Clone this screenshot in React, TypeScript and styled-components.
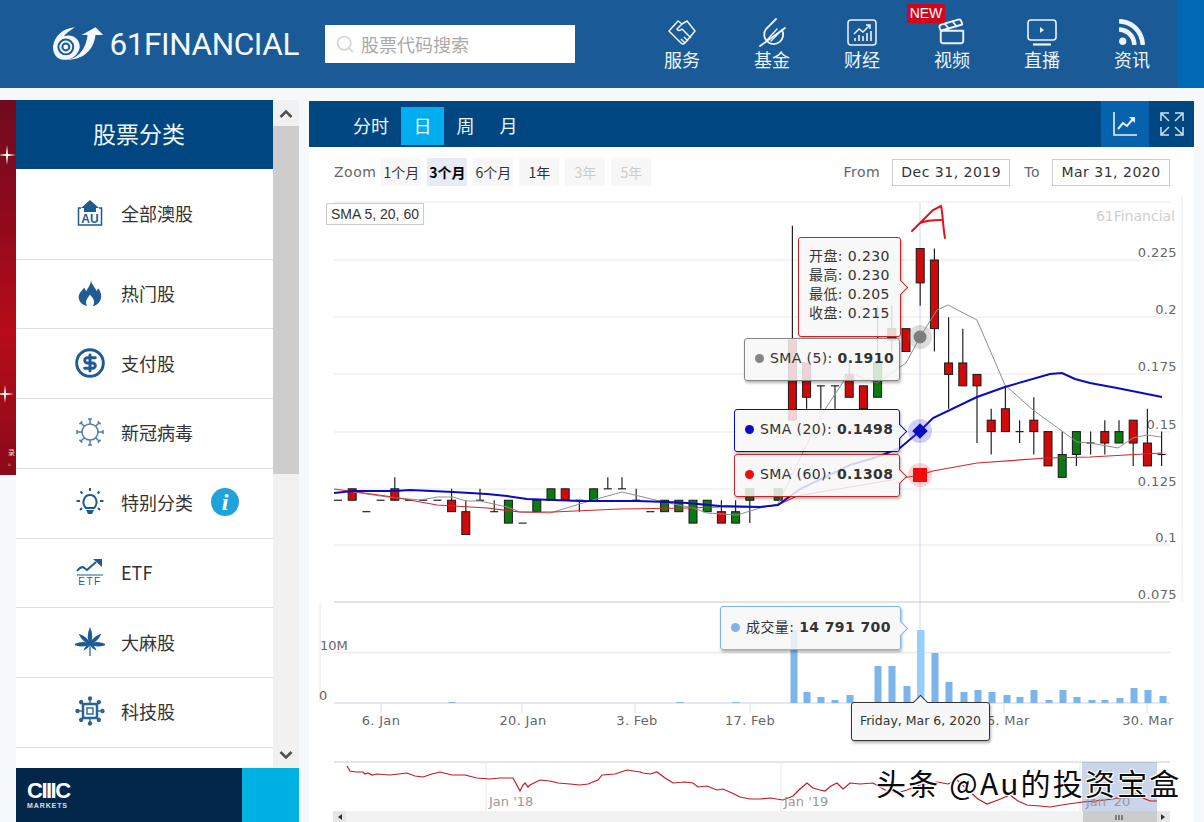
import React from "react";
import styled, { createGlobalStyle } from "styled-components";
import { FaRss } from "react-icons/fa";
import { CircleDollarSign, Clapperboard, Search } from "lucide-react";

const UI_FONT = `"DejaVu Sans", "Noto Sans CJK SC", sans-serif`;
const CJK_FONT = `"Noto Sans CJK SC", "Liberation Sans", sans-serif`;

const GlobalStyle = createGlobalStyle`
  html, body {
    margin: 0;
    height: 822px;
    overflow: hidden;
    background: #f6f9fc;
    font-family: ${CJK_FONT};
  }
  * { box-sizing: border-box; }
`;

/* ---------- header ---------- */
const Header = styled.header`
  display: flex;
  align-items: center;
  height: 88px;
  padding-left: 53px;
  background: #1a5a96;
`;
const Logo = styled.div`
  display: flex;
  align-items: center;
  gap: 6px;
  width: 246px;
  margin-right: 26px;
  color: #f2f8fc;
  font-family: Roboto, sans-serif;
  font-size: 31.5px;
  font-weight: 400;
  letter-spacing: -0.4px;
`;
const SearchBox = styled.div`
  display: flex;
  align-items: center;
  gap: 6px;
  width: 250px;
  height: 38px;
  padding-left: 10px;
  background: #fff;
  color: #a9a9a9;
  font-size: 18px;
`;
const Nav = styled.nav`
  display: flex;
  margin-left: 62px;
`;
const NavItem = styled.div`
  position: relative;
  display: flex;
  flex-direction: column;
  align-items: center;
  width: 90px;
  height: 88px;
  padding-top: 17px;
  color: #eef5fa;
  font-size: 18px;
  line-height: 26px;
  svg { display: block; height: 30px; margin-bottom: -1px; }
`;
const NewBadge = styled.span`
  position: absolute;
  left: 0;
  top: 4px;
  width: 38px;
  height: 19px;
  background: #d0061c;
  border-radius: 2px;
  color: #fff;
  font-family: "Liberation Sans", sans-serif;
  font-size: 14px;
  line-height: 19px;
  text-align: center;
`;
const HeaderEnd = styled.div`
  flex: 1;
  align-self: stretch;
  background: #0068b4;
`;

/* ---------- page body ---------- */
const Main = styled.main`
  display: flex;
  align-items: flex-start;
  padding-top: 12px;
`;
const AdStrip = styled.div`
  position: relative;
  flex: none;
  width: 16px;
  height: 375px;
  overflow: hidden;
  background: linear-gradient(#6f0a20 0%, #8e0a1c 30%, #b60d18 62%, #8a0a1a 100%);
  svg { display: block; }
`;
const AdNote = styled.span`
  position: absolute;
  right: 1px;
  bottom: 8px;
  color: #f1d4d4;
  font-size: 7px;
  line-height: 10px;
  text-align: right;
`;
const SideColumn = styled.div`
  flex: none;
  width: 283px;
  margin-right: 10px;
`;
const SideRow = styled.div`
  display: flex;
  height: 668px;
`;
const SidePanel = styled.aside`
  width: 257px;
  overflow: hidden;
  background: #fff;
`;
const SideTitle = styled.h2`
  height: 69px;
  margin: 0;
  padding-right: 11px;
  background: #004681;
  color: #f0f6fb;
  font-size: 23px;
  font-weight: 400;
  line-height: 66px;
  text-align: center;
`;
const SideItem = styled.div<{ $tall?: boolean }>`
  display: flex;
  align-items: center;
  height: ${(p) => (p.$tall ? "90.5px" : "69.75px")};
  padding: 0 0 2px 58px;
  border-bottom: 1.5px solid #dfdfdf;
  color: #333;
  font-size: 18px;
`;
const SideIcon = styled.span`
  display: flex;
  align-items: center;
  justify-content: center;
  width: 32px;
  height: 32px;
  margin-right: 15px;
  color: #1f5a92;
`;
const InfoBadge = styled.span`
  display: flex;
  align-items: center;
  justify-content: center;
  width: 28px;
  height: 28px;
  margin-left: 18px;
  border-radius: 50%;
  background: #1fa3da;
  color: #fff;
  font-family: "Liberation Serif", serif;
  font-size: 24px;
  font-style: italic;
  font-weight: 700;
`;
const ScrollRail = styled.div`
  display: flex;
  flex-direction: column;
  width: 26px;
  background: #f1f1f1;
`;
const ScrollCap = styled.div`
  display: flex;
  align-items: center;
  justify-content: center;
  height: 26px;
  background: #f1f1f1;
  color: #505050;
`;
const ScrollThumb = styled.div`
  height: 348px;
  background: #cdcdcd;
`;
const ScrollGap = styled.div`
  flex: 1;
`;
const Banner = styled.div`
  display: flex;
  height: 54px;
`;
const BannerBrand = styled.div`
  display: flex;
  flex-direction: column;
  justify-content: center;
  width: 226px;
  padding-left: 11px;
  background: #02264a;
  color: #fff;
  font-family: "Liberation Sans", sans-serif;
`;
const BrandName = styled.span`
  font-size: 22px;
  font-weight: 700;
  line-height: 20px;
  letter-spacing: -1.5px;
`;
const BrandSub = styled.span`
  font-size: 7px;
  font-weight: 700;
  line-height: 9px;
  letter-spacing: 0.9px;
  opacity: 0.85;
`;
const BannerCta = styled.div`
  flex: 1;
  background: #00b2e3;
`;

/* ---------- chart panel ---------- */
const ChartPanel = styled.section`
  flex: none;
  width: 885px;
  margin-top: 1px;
  background: #fff;
`;
const TabBar = styled.div`
  display: flex;
  align-items: stretch;
  height: 46px;
  padding-left: 32px;
  background: #004681;
  color: #f0f6fb;
  font-size: 18px;
`;
const Tab = styled.div<{ $active?: boolean }>`
  display: flex;
  align-items: center;
  justify-content: center;
  min-width: 43px;
  height: 38px;
  margin-top: 6px;
  padding: 0 ${(p) => (p.$active ? "0" : "12px")} 3px;
  background: ${(p) => (p.$active ? "#00aeef" : "transparent")};
`;
const TabSpacer = styled.div`
  flex: 1;
`;
const TabTool = styled.div<{ $active?: boolean }>`
  display: flex;
  align-items: center;
  justify-content: center;
  width: ${(p) => (p.$active ? "48px" : "45px")};
  background: ${(p) => (p.$active ? "#0662ac" : "transparent")};
`;
const RangeBar = styled.div`
  display: flex;
  align-items: center;
  height: 48px;
  padding: 2px 24px 0 25px;
  font-family: ${UI_FONT};
  font-size: 14px;
  letter-spacing: 0.5px;
  color: #666;
`;
const ZoomLabel = styled.span`
  margin-right: 5px;
`;
const ZoomBtn = styled.span<{ $active?: boolean; $off?: boolean }>`
  display: flex;
  align-items: center;
  justify-content: center;
  width: 40px;
  height: 28px;
  margin-right: 6px;
  background: ${(p) => (p.$active ? "#e6ebf5" : "#f7f7f7")};
  color: ${(p) => (p.$off ? "#cccccc" : p.$active ? "#000" : "#333")};
  font-family: ${CJK_FONT};
  font-weight: ${(p) => (p.$active ? 700 : 400)};
  letter-spacing: 0;
`;
const RangeSpacer = styled.div`
  flex: 1;
`;
const DateLabel = styled.span`
  margin: 0 12px 0 14px;
  color: #666;
`;
const DateInput = styled.span`
  display: flex;
  align-items: center;
  justify-content: center;
  width: 118px;
  height: 27px;
  border: 1px solid #ccc;
  color: #333;
`;
const ChartArea = styled.div`
  position: relative;
  height: 627px;
  overflow: hidden;
  svg { display: block; }
`;
const SmaNote = styled.div`
  position: absolute;
  left: 17px;
  top: 8px;
  width: 98px;
  height: 22px;
  border: 1px solid #ccc;
  background: #fff;
  color: #333;
  font-family: "Liberation Sans", sans-serif;
  font-size: 14px;
  line-height: 20px;
  text-align: center;
`;
const Tip = styled.div<{
  $left: number;
  $top: number;
  $width: number;
  $height: number;
  $color: string;
  $arrow?: boolean;
}>`
  position: absolute;
  left: ${(p) => p.$left - 309}px;
  top: ${(p) => p.$top - 195}px;
  display: flex;
  align-items: center;
  width: ${(p) => p.$width}px;
  height: ${(p) => p.$height}px;
  padding: 0 0 4px 10px;
  border: 1.5px solid ${(p) => p.$color};
  border-radius: 3px;
  background: rgba(247, 247, 247, 0.85);
  box-shadow: 1px 2px 3px rgba(0, 0, 0, 0.3);
  color: #333;
  font-family: ${UI_FONT};
  font-size: 14px;
  letter-spacing: 0.4px;
  white-space: nowrap;
  &::after {
    content: "";
    display: ${(p) => (p.$arrow ? "block" : "none")};
    position: absolute;
    right: -6px;
    top: 50%;
    width: 10px;
    height: 10px;
    margin-top: -5px;
    border-top: 1.5px solid ${(p) => p.$color};
    border-right: 1.5px solid ${(p) => p.$color};
    background: #f7f7f7;
    transform: rotate(45deg);
  }
`;
const TipDot = styled.span<{ $color: string }>`
  flex: none;
  width: 9px;
  height: 9px;
  margin: 2px 6px 0 0;
  border-radius: 50%;
  background: ${(p) => p.$color};
`;
const OhlcList = styled.div`
  font-size: 14px;
  line-height: 19px;
`;
const DateTip = styled.div`
  position: absolute;
  left: ${851 - 309}px;
  top: ${702 - 195}px;
  width: 139px;
  height: 39px;
  border: 1.5px solid #333;
  border-radius: 3px;
  background: #f7f7f7;
  box-shadow: 1px 2px 3px rgba(0, 0, 0, 0.3);
  color: #333;
  font-family: ${UI_FONT};
  font-size: 12.5px;
  line-height: 36px;
  text-align: center;
  white-space: nowrap;
  &::before {
    content: "";
    position: absolute;
    left: 63px;
    top: -6px;
    width: 10px;
    height: 10px;
    border-top: 1.5px solid #333;
    border-left: 1.5px solid #333;
    background: #f7f7f7;
    transform: rotate(45deg);
  }
`;
const Watermark = styled.div`
  position: absolute;
  left: ${876 - 309}px;
  top: ${762 - 195}px;
  color: #0c0c0c;
  font-family: ${CJK_FONT};
  font-size: 30px;
  line-height: 40px;
  letter-spacing: 2.2px;
  white-space: nowrap;
  text-shadow: 1px 1px 0 #fff, -1px -1px 0 #fff, 1px -1px 0 #fff, -1px 1px 0 #fff;
`;

/* ---------- chart data: prices in thousandths ---------- */
const STEP = 14.2;
const xAt = (i: number) => 338 + STEP * i;
const yAt = (p: number) => 260 + (225 - p) * 2.288;

// [index, open, high, low, close]
const CANDLES: number[][] = [
  [0, 120, 120, 120, 120], [1, 125, 125, 120, 120], [2, 115, 115, 115, 115], [3, 120, 120, 120, 120],
  [4, 125, 130, 120, 120], [5, 120, 120, 120, 120], [6, 120, 120, 120, 120], [7, 120, 120, 120, 120],
  [8, 120, 125, 115, 115], [9, 115, 120, 105, 105], [10, 120, 125, 120, 120], [11, 115, 120, 115, 115],
  [12, 110, 120, 110, 120], [13, 110, 110, 110, 110], [14, 115, 120, 115, 120], [15, 120, 125, 120, 125],
  [16, 125, 125, 120, 120], [17, 120, 120, 115, 120], [18, 120, 125, 120, 125], [19, 125, 130, 125, 125],
  [20, 125, 130, 125, 125], [21, 120, 125, 120, 120], [22, 115, 115, 115, 115], [23, 115, 120, 115, 120],
  [24, 115, 120, 115, 120], [25, 110, 120, 110, 120], [26, 115, 120, 115, 120], [27, 115, 120, 110, 110],
  [28, 110, 120, 110, 115], [29, 120, 125, 110, 125], [31, 120, 125, 120, 125], [32, 190, 240, 155, 155],
  [33, 180, 180, 160, 165], [34, 170, 170, 160, 170], [35, 170, 170, 160, 170], [36, 175, 180, 165, 165],
  [37, 170, 170, 160, 160], [38, 165, 205, 165, 180], [39, 195, 205, 185, 190], [40, 195, 195, 185, 185],
  [41, 230, 230, 205, 215], [42, 225, 230, 185, 195], [43, 180, 200, 160, 175], [44, 180, 195, 170, 170],
  [45, 175, 175, 145, 170], [46, 155, 160, 140, 150], [47, 160, 170, 150, 150], [48, 150, 155, 145, 150],
  [49, 155, 165, 140, 150], [50, 150, 150, 135, 135], [51, 130, 150, 130, 140], [52, 140, 150, 135, 150],
  [53, 145, 150, 140, 145], [54, 150, 155, 140, 145], [55, 145, 155, 145, 150], [56, 155, 155, 135, 145],
  [57, 145, 160, 135, 135], [58, 140, 150, 135, 140],
];

const SMA20 = "334,493 353,491 395,491 410,490 453,492 487,494 507,496 527,499 580,501 637,501 667,502 687,503 720,506 760,507 778,505 800,489 850,465 877,457 900,448 920,431 933,418 977,397 1005,387 1050,374 1062,373 1075,379 1090,383 1117,388 1162,397";
const SMA60 = "334,489 357,492 393,497 437,505 487,508 520,512 553,512 620,509 687,508 720,507 760,507 778,505 797,496 903,478 920,475 933,471 977,463 1047,458 1090,457 1162,453";
const SMA5 = "353,492 387,497 420,500 437,497 453,497 466,501 480,501 507,507 520,512 550,513 593,500 622,492 664,502 693,508 707,513 737,515 760,508 778,504 820,417 849,373 877,383 906,363 920,337 937,310 948,305 977,320 1005,385 1033,410 1077,442 1090,443 1118,448 1133,438 1147,435 1161,437";
const NAV_LINE = "347,766 350,771 356,772 363,772 365,774 368,773 372,775 377,774 390,775 407,773 415,776 423,777 432,774 440,772 452,775 465,775 477,778 490,779 500,778 513,778 520,791 523,785 525,783 528,787 530,785 540,780 550,781 558,783 570,784 580,785 588,784 593,782 598,780 602,775 615,774 627,770 640,772 643,773 650,774 657,772 665,778 673,783 685,782 693,783 698,787 707,786 717,790 723,789 732,793 740,797 750,799 760,799 770,798 783,800 793,796 800,789 807,783 813,788 820,790 825,791 831,786 837,783 843,789 850,783 860,784 873,783 885,790 897,793 907,790 920,785 937,782 948,784 957,780 970,792 978,799 987,804 998,800 1010,795 1018,801 1027,805 1040,806 1050,807 1068,804 1083,802 1105,800 1127,797 1135,794 1143,798 1150,801 1157,801";

const VOLUMES: number[][] = [
  [794, 630], [807, 692], [821, 697], [835, 700], [850, 695], [878, 666], [892, 666], [907, 686],
  [935, 653], [949, 682], [964, 692], [978, 690], [992, 692], [1007, 695], [1020, 697], [1034, 690],
  [1049, 700], [1063, 690], [1077, 697], [1092, 700], [1105, 700], [1120, 698], [1134, 688], [1148, 690], [1163, 696],
  [452, 702], [680, 702], [736, 702],
];

const PRICE_GRID: [number, string][] = [
  [202, ""], [260, "0.225"], [317, "0.2"], [374, "0.175"], [432, "0.15"], [489, "0.125"], [545, "0.1"], [602, "0.075"],
];
const AXIS_LABELS: [number, string][] = [
  [381, "6. Jan"], [523, "20. Jan"], [637, "3. Feb"], [750, "17. Feb"], [1004, "16. Mar"], [1148, "30. Mar"],
];
const AXIS_TICKS = [381, 522, 635, 750, 1004, 1147];

function Candle({ data }: { data: number[] }) {
  const [i, open, high, low, close] = data;
  const x = xAt(i);
  const flat = open === close;
  const up = close > open;
  return (
    <g>
      {high !== low && <line x1={x} x2={x} y1={yAt(high)} y2={yAt(low)} stroke="#222" strokeWidth={1.2} />}
      {flat ? (
        <line x1={x - 4} x2={x + 4} y1={yAt(open)} y2={yAt(open)} stroke="#222" strokeWidth={1.2} />
      ) : (
        <rect
          x={x - 4}
          width={8}
          y={yAt(Math.max(open, close))}
          height={yAt(Math.min(open, close)) - yAt(Math.max(open, close))}
          fill={up ? "#0b7a12" : "#cf0a0a"}
          stroke="#1a1a1a"
          strokeWidth={1}
        />
      )}
    </g>
  );
}

function StockChart() {
  const axisFont = { fontFamily: "DejaVu Sans, sans-serif", fontSize: 13 };
  return (
    <svg width={885} height={627} viewBox="309 195 885 627">
      <line x1={1182} x2={1182} y1={195} y2={602} stroke="#e8eef5" />
      {PRICE_GRID.map(([y, label]) => (
        <g key={y}>
          <line x1={334} x2={1170} y1={y} y2={y} stroke={y === 602 ? "#e3e3e3" : "#e9e9e9"} strokeWidth={y === 602 ? 2 : 1} />
          {label && (
            <text x={1177} y={y - 3} textAnchor="end" fill="#666" letterSpacing={0.4} {...axisFont}>
              {label}
            </text>
          )}
        </g>
      ))}
      <text x={1175} y={221} textAnchor="end" fill="#cfcfcf" fontFamily="DejaVu Sans, sans-serif" fontSize={14}>
        61Financial
      </text>
      <line x1={920} x2={920} y1={203} y2={705} stroke="#ccd6eb" />
      {CANDLES.map((c) => (
        <Candle key={c[0]} data={c} />
      ))}
      <polyline points={SMA5} fill="none" stroke="#8f8f8f" strokeWidth={1} />
      <polyline points={SMA60} fill="none" stroke="#d6262c" strokeWidth={1.2} />
      <polyline points={SMA20} fill="none" stroke="#0a0ac2" strokeWidth={2} />

      <path d="M912 231 L933 210 L941 206 C943 215 943 228 945 238 M920 223 C927 220 934 220 941 220" fill="none" stroke="#e0141c" strokeWidth={2} strokeLinecap="round" />

      <circle cx={920} cy={337} r={12} fill="rgba(120,120,120,0.25)" />
      <circle cx={920} cy={337} r={6.5} fill="#7d7d7d" />
      <circle cx={920} cy={431} r={12} fill="rgba(60,60,230,0.25)" />
      <rect x={914.5} y={425.5} width={11} height={11} transform="rotate(45 920 431)" fill="#0a0ac2" />
      <circle cx={920} cy={475} r={12} fill="rgba(230,60,60,0.22)" />
      <rect x={913} y={468} width={14} height={14} fill="#ee0c0c" />

      {/* volume pane */}
      <line x1={320} x2={320} y1={602} y2={702} stroke="#e6e6e6" />
      <line x1={334} x2={1170} y1={652.5} y2={652.5} stroke="#e9e9e9" strokeWidth={1.5} />
      <line x1={334} x2={1170} y1={703} y2={703} stroke="#c9d4e3" strokeWidth={1.2} />
      <text x={320} y={650} fill="#666" {...axisFont}>10M</text>
      <text x={319} y={700} fill="#666" {...axisFont}>0</text>
      {VOLUMES.map(([x, top]) => (
        <rect key={x} x={x - 3.5} y={top} width={7} height={703 - top} fill="#7cb5ec" />
      ))}
      <rect x={917} y={630} width={7.5} height={73} fill="#95ceff" />
      {AXIS_TICKS.map((x) => (
        <line key={x} x1={x} x2={x} y1={703} y2={713} stroke="#d8dfe8" />
      ))}
      {AXIS_LABELS.map(([x, label]) => (
        <text key={label} x={x} y={725} textAnchor="middle" fill="#666" letterSpacing={0.3} {...axisFont}>
          {label}
        </text>
      ))}

      {/* navigator */}
      <line x1={334} x2={1170} y1={762} y2={762} stroke="#c8ccd6" />
      <rect x={1082} y={762} width={75} height={49} fill="rgba(102,133,194,0.35)" />
      {[486, 781, 1080].map((x) => (
        <line key={x} x1={x} x2={x} y1={762} y2={811} stroke="#e9e9e9" />
      ))}
      <polyline points={NAV_LINE} fill="none" stroke="#c01a22" strokeWidth={1.2} />
      {[[489, "Jan '18"], [784, "Jan '19"], [1086, "Jan '20"]].map(([x, label]) => (
        <text key={label} x={x} y={806} fill="#999" {...axisFont}>{label}</text>
      ))}
      <rect x={333} y={811} width={837} height={11} fill="#f2f2f2" />
      <rect x={333} y={811} width={13} height={11} fill="#e6e6e6" />
      <path d="M342 814 v6 l-4 -3z" fill="#333" />
      <rect x={1083} y={811} width={74} height={11} fill="#cccccc" />
      <path d="M1116 815 v5 M1119 815 v5 M1122 815 v5" stroke="#333" />
      <rect x={1157} y={811} width={13} height={11} fill="#e6e6e6" />
      <path d="M1161 814 v6 l4 -3z" fill="#333" />
    </svg>
  );
}

/* ---------- drawn icons ---------- */
const LogoMark = () => (
  <svg width="51" height="34" viewBox="0 0 51 34" fill="none">
    <path d="M0 20 C1 9 10 1 22 0 C18 3 13 6 11 9 C21 6 28 13 27 21 C25 30 17 33 11 33 C4 33 0 27 0 20 Z" fill="#f2f8fc" />
    <circle cx="13" cy="20" r="7.5" stroke="#1a5a96" strokeWidth="2" />
    <circle cx="13" cy="20" r="3.5" stroke="#1a5a96" strokeWidth="2" />
    <path d="M12 33 C24 33 33 24 35 8 L29 8 L43 0 L51 8 L43 8 C41 24 30 34 12 33 Z" fill="#f2f8fc" />
  </svg>
);
const HandshakeIcon = () => (
  <svg width="30" height="30" viewBox="0 0 30 30" fill="none" stroke="#eef5fa" strokeWidth="1.5" strokeLinejoin="round">
    <path d="M11 4 L15 7 L20 4 L28 14 L18 26 Q16 28 14 26 L2 14 Z" />
    <path d="M15 7 L10 12 Q12 15 15 12 L24 21 M21 24 L17 20 M18 26 L14 22" />
  </svg>
);
const FundIcon = () => (
  <svg width="30" height="30" viewBox="0 0 30 30" fill="none" stroke="#eef5fa" strokeWidth="1.8" strokeLinecap="round">
    <path d="M19 2 L9 12 A9.5 9.5 0 1 0 25 13" />
    <path d="M3 29 L28 11" />
    <path d="M10 23 L20 12 M14 24 L23 15" strokeWidth="1.3" />
  </svg>
);
const FinanceIcon = () => (
  <svg width="30" height="30" viewBox="0 0 30 30" fill="none" stroke="#eef5fa" strokeWidth="1.5">
    <rect x="1" y="3" width="28" height="25" rx="3" />
    <path d="M7 17 L12 12 L16 15 L23 8 M19 8 H23 V12" />
    <path d="M8 24 V21 M12 24 V18 M16 24 V19 M20 24 V16 M24 24 V14" strokeWidth="1.6" />
  </svg>
);
const LiveIcon = () => (
  <svg width="30" height="30" viewBox="0 0 30 30" fill="none" stroke="#eef5fa" strokeWidth="1.6">
    <rect x="1" y="3" width="28" height="20" rx="3" />
    <path d="M13 10 L17 13 L13 16 Z" fill="#eef5fa" stroke="none" />
    <path d="M6 27.5 H24" strokeWidth="2.2" />
  </svg>
);
const TrendIcon = () => (
  <svg width="26" height="26" viewBox="0 0 26 26" fill="none" stroke="#e9f2f9" strokeWidth="1.6">
    <path d="M2 1 V24 H25" />
    <path d="M6 18 L11 12 L15 15 L21 8" strokeWidth="2" />
    <path d="M17 6 H23 V12 Z" fill="#e9f2f9" stroke="none" />
  </svg>
);
const ExpandIcon = () => (
  <svg width="24" height="24" viewBox="0 0 24 24" fill="none" stroke="#cfe2f0" strokeWidth="1.5">
    <path d="M1 9 V1 H9 M1 1 L9 9 M15 1 H23 V9 M23 1 L15 9 M1 15 V23 H9 M1 23 L9 15 M23 15 V23 H15 M23 23 L15 15" />
  </svg>
);
const AuIcon = () => (
  <svg width="26" height="28" viewBox="0 0 26 28" fill="none">
    <path d="M13 1 L22 9 H19 V13 H7 V9 H4 Z" fill="#1f5a92" />
    <path d="M4 9 H1.5 V26 H24.5 V9 H22" stroke="#1f5a92" strokeWidth="1.5" />
    <text x="13" y="24" textAnchor="middle" fill="#1f5a92" fontFamily="Liberation Sans, sans-serif" fontSize="12" fontWeight="700">AU</text>
  </svg>
);
const FlameIcon = () => (
  <svg width="28" height="30" viewBox="0 0 30 30" fill="#1f5a92">
    <path d="M16 1 C17 7 21 9 22 13 C23 11 24 11 24 10 C27 15 28 19 26 23 C24 27 20 29 18 29 C21 25 19 21 15 17 C12 21 9 24 12 29 C8 28 4 26 3 21 C2 15 7 12 9 9 C10 11 10 12 11 13 C13 9 16 6 16 1 Z" />
  </svg>
);
const VirusIcon = () => {
  const spikes = [0, 45, 90, 135, 180, 225, 270, 315];
  return (
    <svg width="30" height="30" viewBox="0 0 30 30" fill="none" stroke="#4d7ea8" strokeWidth="1.5">
      <circle cx="15" cy="15" r="8" />
      {spikes.map((a) => (
        <path key={a} transform={`rotate(${a} 15 15)`} d="M15 7 V2 M13 2 H17" />
      ))}
    </svg>
  );
};
const BulbIcon = () => (
  <svg width="30" height="30" viewBox="0 0 30 30" fill="none" stroke="#1f5a92" strokeWidth="2">
    <path d="M11 21 C6 16 9 8 15 8 C21 8 24 16 19 21 Z" />
    <path d="M11 23 H19 L17 27 H13 Z" fill="#1f5a92" stroke="none" />
    <path d="M15 4 V1 M5 14 H1.5 M25 14 H28.5 M7.5 6.5 L5.5 4.5 M22.5 6.5 L24.5 4.5 M5 23 L7 21 M25 23 L23 21" />
  </svg>
);
const EtfIcon = () => (
  <svg width="28" height="28" viewBox="0 0 28 28" fill="none" stroke="#1f5a92">
    <path d="M1 13 Q4 9 7 9 L11 12 L20 4" strokeWidth="2" />
    <path d="M17 1 H26 V9 Z" fill="#1f5a92" stroke="none" />
    <path d="M1 17 H27" strokeWidth="1" />
    <text x="14" y="27" textAnchor="middle" fill="#1f5a92" stroke="none" fontFamily="Liberation Sans, sans-serif" fontSize="10" letterSpacing="1.5">ETF</text>
  </svg>
);
const LeafIcon = () => {
  const leaves: [number, number][] = [[0, 1], [-48, 0.9], [48, 0.9], [-92, 1], [92, 1], [-135, 0.55], [135, 0.55]];
  return (
    <svg width="30" height="30" viewBox="0 0 30 30" fill="#1f5a92">
      {leaves.map(([angle, size]) => (
        <path
          key={angle}
          transform={`translate(15 17) rotate(${angle}) scale(${size})`}
          d="M0 1 Q-4.5 -7 0 -17 Q4.5 -7 0 1 Z"
        />
      ))}
      <path d="M15 17 V29" stroke="#1f5a92" strokeWidth="1.2" />
    </svg>
  );
};
const ChipIcon = () => {
  const legs = [0, 45, 90, 135, 180, 225, 270, 315];
  return (
    <svg width="30" height="30" viewBox="0 0 30 30" fill="none" stroke="#2b6398" strokeWidth="1.4">
      <rect x="8" y="8" width="14" height="14" rx="1.5" strokeWidth="2.5" />
      <rect x="12" y="12" width="6" height="6" />
      {legs.map((a) => (
        <g key={a} transform={`rotate(${a} 15 15)`}>
          <path d="M15 7 V3.5" />
          <circle cx="15" cy="2.5" r="1.5" fill="#2b6398" />
        </g>
      ))}
    </svg>
  );
};
const Sparkle = ({ x, y, r }: { x: number; y: number; r: number }) => (
  <path d={`M${x} ${y - r} L${x + 1} ${y - 1} L${x + r} ${y} L${x + 1} ${y + 1} L${x} ${y + r} L${x - 1} ${y + 1} L${x - r} ${y} L${x - 1} ${y - 1} Z`} fill="#fff" />
);
const Chevron = ({ up }: { up?: boolean }) => (
  <svg width="14" height="9" viewBox="0 0 14 9" fill="none" stroke="currentColor" strokeWidth="2.6">
    <path d={up ? "M1.5 8 L7 2.5 L12.5 8" : "M1.5 1 L7 6.5 L12.5 1"} />
  </svg>
);

const NAV_ITEMS = [
  { label: "服务", icon: <HandshakeIcon /> },
  { label: "基金", icon: <FundIcon /> },
  { label: "财经", icon: <FinanceIcon /> },
  { label: "视频", icon: <Clapperboard size={30} strokeWidth={1.5} />, isNew: true },
  { label: "直播", icon: <LiveIcon /> },
  { label: "资讯", icon: <FaRss size={26} /> },
];

const SIDE_ITEMS = [
  { label: "全部澳股", icon: <AuIcon /> },
  { label: "热门股", icon: <FlameIcon /> },
  { label: "支付股", icon: <CircleDollarSign size={32} strokeWidth={2.2} /> },
  { label: "新冠病毒", icon: <VirusIcon /> },
  { label: "特别分类", icon: <BulbIcon />, info: true },
  { label: "ETF", icon: <EtfIcon /> },
  { label: "大麻股", icon: <LeafIcon /> },
  { label: "科技股", icon: <ChipIcon /> },
];

export default function App() {
  return (
    <>
      <GlobalStyle />
      <Header>
        <Logo>
          <LogoMark />
          61FINANCIAL
        </Logo>
        <SearchBox>
          <Search size={20} color="#d5d5d5" strokeWidth={2} />
          股票代码搜索
        </SearchBox>
        <Nav>
          {NAV_ITEMS.map((item) => (
            <NavItem key={item.label}>
              {item.isNew && <NewBadge>NEW</NewBadge>}
              {item.icon}
              {item.label}
            </NavItem>
          ))}
        </Nav>
        <HeaderEnd />
      </Header>
      <Main>
        <AdStrip>
          <svg width="16" height="375">
            <Sparkle x={7} y={55} r={10} />
            <Sparkle x={5} y={294} r={9} />
          </svg>
          <AdNote>
            录
            <br />
            。
          </AdNote>
        </AdStrip>
        <SideColumn>
          <SideRow>
            <SidePanel>
              <SideTitle>股票分类</SideTitle>
              {SIDE_ITEMS.map((item, i) => (
                <SideItem key={item.label} $tall={i === 0}>
                  <SideIcon>{item.icon}</SideIcon>
                  {item.label}
                  {item.info && <InfoBadge>i</InfoBadge>}
                </SideItem>
              ))}
            </SidePanel>
            <ScrollRail>
              <ScrollCap>
                <Chevron up />
              </ScrollCap>
              <ScrollThumb />
              <ScrollGap />
              <ScrollCap>
                <Chevron />
              </ScrollCap>
            </ScrollRail>
          </SideRow>
          <Banner>
            <BannerBrand>
              <BrandName>CIIIC</BrandName>
              <BrandSub>MARKETS</BrandSub>
            </BannerBrand>
            <BannerCta />
          </Banner>
        </SideColumn>
        <ChartPanel>
          <TabBar>
            <Tab>分时</Tab>
            <Tab $active>日</Tab>
            <Tab>周</Tab>
            <Tab>月</Tab>
            <TabSpacer />
            <TabTool $active>
              <TrendIcon />
            </TabTool>
            <TabTool>
              <ExpandIcon />
            </TabTool>
          </TabBar>
          <RangeBar>
            <ZoomLabel>Zoom</ZoomLabel>
            <ZoomBtn>1个月</ZoomBtn>
            <ZoomBtn $active>3个月</ZoomBtn>
            <ZoomBtn>6个月</ZoomBtn>
            <ZoomBtn>1年</ZoomBtn>
            <ZoomBtn $off>3年</ZoomBtn>
            <ZoomBtn $off>5年</ZoomBtn>
            <RangeSpacer />
            <DateLabel>From</DateLabel>
            <DateInput>Dec 31, 2019</DateInput>
            <DateLabel>To</DateLabel>
            <DateInput>Mar 31, 2020</DateInput>
          </RangeBar>
          <ChartArea>
            <StockChart />
            <SmaNote>SMA 5, 20, 60</SmaNote>
            <Tip $left={798} $top={237} $width={103} $height={100} $color="#c8252b" $arrow>
              <OhlcList>
                <div>开盘: 0.230</div>
                <div>最高: 0.230</div>
                <div>最低: 0.205</div>
                <div>收盘: 0.215</div>
              </OhlcList>
            </Tip>
            <Tip $left={744} $top={338} $width={156} $height={43} $color="#858585">
              <TipDot $color="#858585" />
              <span>
                SMA (5): <b>0.1910</b>
              </span>
            </Tip>
            <Tip $left={734} $top={409} $width={166} $height={43} $color="#0a0ac2" $arrow>
              <TipDot $color="#0a0acf" />
              <span>
                SMA (20): <b>0.1498</b>
              </span>
            </Tip>
            <Tip $left={734} $top={454} $width={166} $height={43} $color="#c8252b" $arrow>
              <TipDot $color="#ee0c0c" />
              <span>
                SMA (60): <b>0.1308</b>
              </span>
            </Tip>
            <Tip $left={720} $top={606} $width={181} $height={44} $color="#7cb5ec" $arrow>
              <TipDot $color="#7cb5ec" />
              <span>
                成交量: <b>14 791 700</b>
              </span>
            </Tip>
            <DateTip>Friday, Mar 6, 2020</DateTip>
            <Watermark>头条 @Au的投资宝盒</Watermark>
          </ChartArea>
        </ChartPanel>
      </Main>
    </>
  );
}
